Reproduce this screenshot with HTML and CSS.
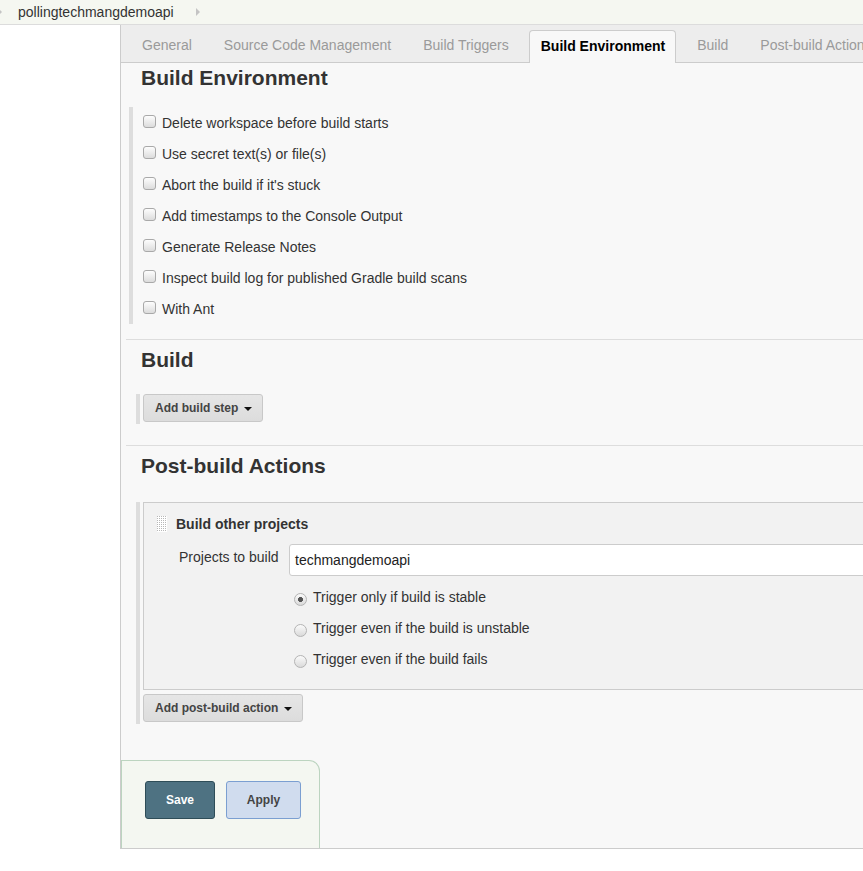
FILE: index.html
```html
<!DOCTYPE html>
<html>
<head>
<meta charset="utf-8">
<link rel="stylesheet" href="styles.css">
</head>
<body>
<div class="breadcrumbs">
  <span class="crumb-arrow first"></span>
  <span class="crumb">pollingtechmangdemoapi</span>
  <span class="crumb-arrow"></span>
</div>
<div class="page">
  <div class="side"></div>
  <div class="main">
    <div class="tabbar">
      <div class="tab">General</div>
      <div class="tab">Source Code Management</div>
      <div class="tab">Build Triggers</div>
      <div class="tab active">Build Environment</div>
      <div class="tab">Build</div>
      <div class="tab">Post-build Actions</div>
    </div>

    <div class="section first">
      <h3>Build Environment</h3>
      <div class="checklist">
        <label class="check-row"><input type="checkbox" class="cb"><span>Delete workspace before build starts</span></label>
        <label class="check-row"><input type="checkbox" class="cb"><span>Use secret text(s) or file(s)</span></label>
        <label class="check-row"><input type="checkbox" class="cb"><span>Abort the build if it's stuck</span></label>
        <label class="check-row"><input type="checkbox" class="cb"><span>Add timestamps to the Console Output</span></label>
        <label class="check-row"><input type="checkbox" class="cb"><span>Generate Release Notes</span></label>
        <label class="check-row"><input type="checkbox" class="cb"><span>Inspect build log for published Gradle build scans</span></label>
        <label class="check-row"><input type="checkbox" class="cb"><span>With Ant</span></label>
      </div>
    </div>

    <div class="section divided">
      <h3>Build</h3>
      <div class="step-block">
        <button class="menu-btn">Add build step<span class="caret"></span></button>
      </div>
    </div>

    <div class="section divided">
      <h3>Post-build Actions</h3>
      <div class="post-block">
        <div class="action-box">
          <div class="action-head">
            <svg class="handle" width="10" height="16" viewBox="0 0 10 16">
              <defs>
                <pattern id="dots" width="2" height="2" patternUnits="userSpaceOnUse">
                  <rect width="1" height="1" fill="#b8b8b8"/>
                </pattern>
              </defs>
              <rect width="10" height="16" fill="#ffffff"/>
              <rect width="10" height="16" fill="url(#dots)"/>
            </svg>
            <span class="action-title">Build other projects</span>
          </div>
          <div class="field-row">
            <div class="field-label">Projects to build</div>
            <div class="field-input">techmangdemoapi</div>
          </div>
          <div class="radios">
            <label class="radio-row"><input type="radio" name="trig" class="rb" checked><span>Trigger only if build is stable</span></label>
            <label class="radio-row"><input type="radio" name="trig" class="rb"><span>Trigger even if the build is unstable</span></label>
            <label class="radio-row"><input type="radio" name="trig" class="rb"><span>Trigger even if the build fails</span></label>
          </div>
        </div>
        <button class="menu-btn post">Add post-build action<span class="caret"></span></button>
      </div>
    </div>

    <div class="bottom-bar">
      <button class="save-btn">Save</button>
      <button class="apply-btn">Apply</button>
    </div>
  </div>
</div>
</body>
</html>
```
FILE: styles.css
```css
html, body {
  margin: 0;
  padding: 0;
  overflow: hidden;
  background: #ffffff;
}
body {
  font-family: "Liberation Sans", Arial, sans-serif;
  font-size: 14px;
  color: #333333;
}
.breadcrumbs {
  height: 24px;
  background: #f5f7f1;
  border-bottom: 1px solid #dcdcdc;
  display: flex;
  align-items: center;
}
.crumb {
  color: #333;
  font-size: 14px;
  line-height: 24px;
  margin-left: 16px;
}
.crumb-arrow {
  width: 0;
  height: 0;
  border-top: 4px solid transparent;
  border-bottom: 4px solid transparent;
  border-left: 4px solid #c4c4c4;
  margin-left: 22px;
}
.crumb-arrow.first {
  margin-left: -2px;
}
.page {
  display: flex;
  align-items: flex-start;
}
.side {
  width: 120px;
  flex: none;
}
.main {
  width: 1000px;
  flex: none;
  background: #f8f8f8;
  border-left: 1px solid #cccccc;
  border-bottom: 1px solid #cccccc;
}
.tabbar {
  height: 37px;
  background: #ededed;
  border-bottom: 1px solid #cccccc;
  display: flex;
  align-items: flex-end;
  gap: 10px;
  padding-left: 10px;
}
.tab {
  line-height: 33px;
  padding: 0 11px;
  color: #9a9a9a;
  font-size: 14px;
  white-space: nowrap;
}
.tab.active {
  background: #f8f8f8;
  color: #000;
  font-weight: bold;
  border: 1px solid #cccccc;
  border-bottom: none;
  border-radius: 4px 4px 0 0;
  margin-bottom: -1px;
  margin-left: -1px;
  padding: 0 10px 1px 11px;
  line-height: 31px;
}
.section {
  margin-left: 5px;
}
.section.divided {
  border-top: 1px solid #dddddd;
  padding-top: 5px;
}
.section h3 {
  margin: 0;
  padding-left: 15px;
  font-size: 21px;
  line-height: 30px;
  font-weight: bold;
  color: #333;
}
.checklist {
  margin: 14px 0 15px 3px;
  border-left: 4px solid #dddddd;
  padding-left: 10px;
}
.check-row {
  display: flex;
  align-items: center;
  height: 31px;
  color: #333;
}
.cb {
  appearance: none;
  -webkit-appearance: none;
  width: 13px;
  height: 13px;
  margin: 0 6px 2px 0;
  border: 1px solid #a9a9a9;
  border-radius: 3px;
  background: linear-gradient(#fdfdfd, #dcdcdc);
  box-sizing: border-box;
  flex: none;
}
.step-block {
  margin: 19px 0 21px 10px;
  border-left: 4px solid #dddddd;
  padding: 0 0 2px 3px;
}
.menu-btn {
  height: 28px;
  padding: 0 10px 0 11px;
  font-family: "Liberation Sans", Arial, sans-serif;
  font-size: 12px;
  font-weight: bold;
  color: #444;
  background: linear-gradient(#e6e6e6, #dcdcdc);
  border: 1px solid #c8c8c8;
  border-radius: 3px;
  display: inline-flex;
  align-items: center;
}
.caret {
  width: 0;
  height: 0;
  border-left: 4px solid transparent;
  border-right: 4px solid transparent;
  border-top: 4px solid #111;
  margin-left: 6px;
  margin-top: 1px;
}
.post-block {
  margin: 21px 0 36px 10px;
  border-left: 4px solid #dddddd;
  padding: 0 0 2px 3px;
}
.action-box {
  border: 1px solid #cccccc;
  background: #f2f2f2;
  padding: 10px 0 15px 0;
  margin-bottom: 4px;
}
.action-head {
  display: flex;
  align-items: center;
  height: 22px;
  padding-left: 13px;
}
.handle {
  flex: none;
  margin-right: 9px;
}
.action-title {
  font-weight: bold;
  font-size: 14px;
}
.field-row {
  display: flex;
  margin-top: 9px;
}
.field-label {
  width: 110px;
  padding-left: 35px;
  flex: none;
  line-height: 26px;
}
.field-input {
  flex: 1;
  height: 30px;
  line-height: 30px;
  background: #ffffff;
  border: 1px solid #cccccc;
  border-radius: 3px;
  padding-left: 5px;
  color: #222;
}
.radios {
  margin-top: 5px;
  padding-left: 145px;
}
.radio-row {
  display: flex;
  align-items: center;
  height: 31px;
}
.rb {
  appearance: none;
  -webkit-appearance: none;
  width: 13px;
  height: 13px;
  margin: 6px 6px 0 5px;
  border: 1px solid #b4b4b4;
  border-radius: 50%;
  background: linear-gradient(#fbfbfb, #dadada);
  box-sizing: border-box;
  flex: none;
}
.rb:checked {
  background: radial-gradient(circle, #555 0, #555 2.2px, transparent 2.8px), linear-gradient(#fbfbfb, #dadada);
}
.bottom-bar {
  width: 174px;
  height: 67px;
  padding: 20px 0 0 23px;
  background: #f4f7f1;
  border: 1px solid #bcd4c0;
  border-bottom: none;
  border-radius: 0 11px 0 0;
  display: flex;
  align-items: flex-start;
}
.save-btn, .apply-btn {
  height: 38px;
  font-family: "Liberation Sans", Arial, sans-serif;
  font-size: 12px;
  font-weight: bold;
  border-radius: 3px;
  padding: 0;
}
.save-btn {
  width: 70px;
  background: #4e7282;
  border: 1px solid #2e4d58;
  color: #ffffff;
}
.apply-btn {
  width: 75px;
  margin-left: 11px;
  background: #d0dcee;
  border: 1px solid #7b9fd1;
  color: #444;
}
```
